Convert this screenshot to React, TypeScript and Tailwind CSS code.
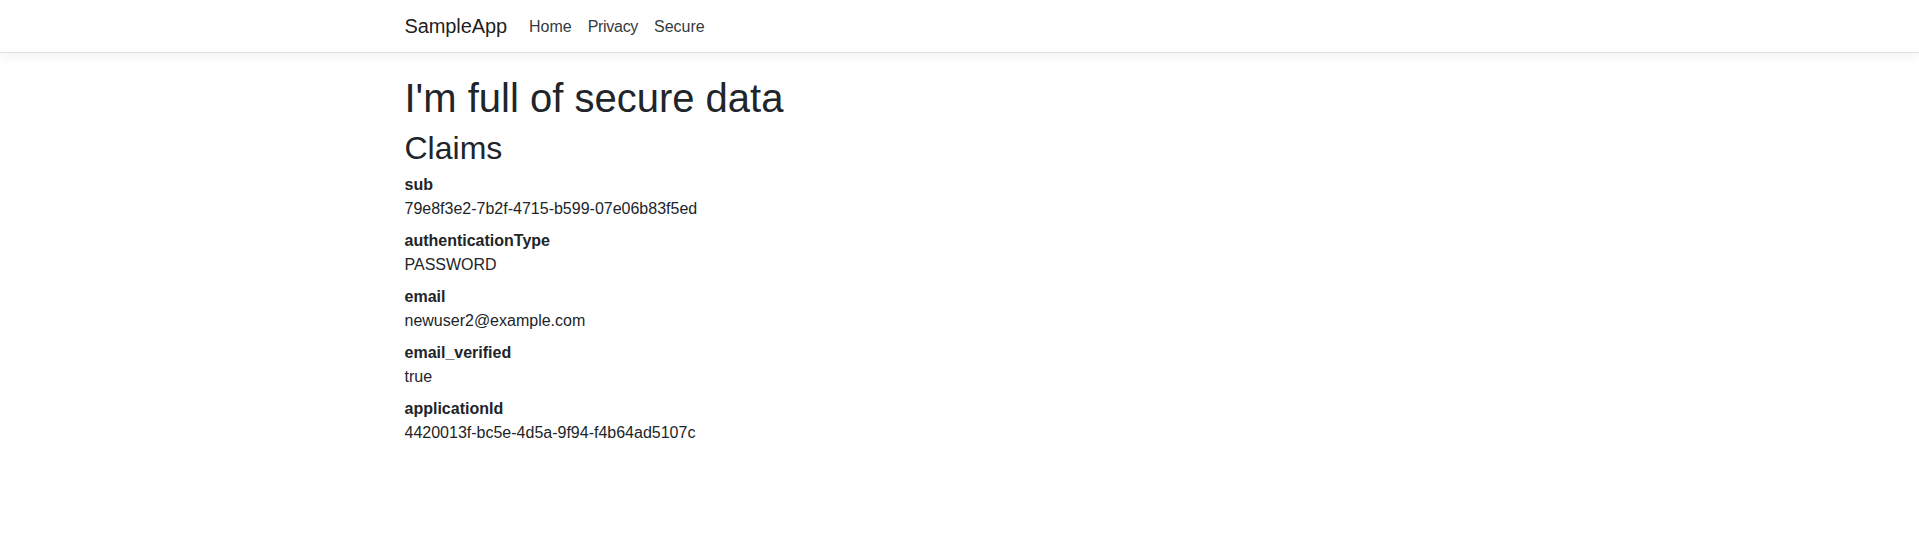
import React from "react";

const claims: [string, string][] = [
  ["sub", "79e8f3e2-7b2f-4715-b599-07e06b83f5ed"],
  ["authenticationType", "PASSWORD"],
  ["email", "newuser2@example.com"],
  ["email_verified", "true"],
  ["applicationId", "4420013f-bc5e-4d5a-9f94-f4b64ad5107c"],
];

export default function App() {
  return (
    <div className="min-h-[539px] bg-white font-['Liberation_Sans',Arial,sans-serif] text-[#212529]">
      <header className="h-[53px] border-b border-[#dee2e6] bg-white shadow-[0_4px_12px_rgba(0,0,0,0.05)]">
        <nav className="mx-auto flex h-[52px] max-w-[1140px] items-center px-[15px]">
          <a className="mr-[14px] py-[5px] text-[20px] leading-[30px] tracking-[-0.1px] text-[rgba(0,0,0,0.9)]">SampleApp</a>
          <ul className="flex items-center pt-[2px]">
            <li><a className="block px-2 text-[16px] leading-[24px] text-[#343a40]">Home</a></li>
            <li><a className="block px-2 text-[16px] leading-[24px] tracking-[-0.3px] text-[#343a40]">Privacy</a></li>
            <li><a className="block px-2 text-[16px] leading-[24px] text-[#343a40]">Secure</a></li>
          </ul>
        </nav>
      </header>
      <main className="mx-auto max-w-[1140px] px-[15px] pt-[21px]">
        <h1 className="mb-[7px] text-[40px] font-normal leading-[48px]">I'm full of secure data</h1>
        <h2 className="mb-[6px] text-[32px] font-normal leading-[38px]">Claims</h2>
        <dl className="text-[16px] leading-[24px]">
          {claims.map(([k, v]) => (
            <div key={k}>
              <dt className="font-bold">{k}</dt>
              <dd className="mb-2">{v}</dd>
            </div>
          ))}
        </dl>
      </main>
    </div>
  );
}
